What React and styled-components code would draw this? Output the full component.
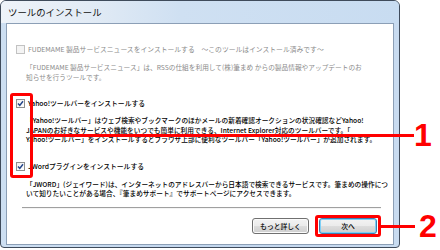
import React from "react";
import styled, { createGlobalStyle } from "styled-components";

const GlobalStyle = createGlobalStyle`
  html, body { margin: 0; padding: 0; background: #ffffff; }
  body { font-family: "Noto Sans CJK JP", "Noto Sans", sans-serif; }
`;

const Stage = styled.div`
  position: relative;
  width: 440px;
  height: 250px;
  overflow: hidden;
`;

const Window = styled.div`
  width: 400px;
  height: 248px;
  box-sizing: border-box;
  border: 1px solid #3f4b5b;
  border-radius: 6px 6px 4px 4px;
  background: linear-gradient(to right, #cddff2 0%, #c3d7ee 50%, #c8dbf0 100%);
  display: flex;
  flex-direction: column;
  overflow: hidden;
`;

const TitleBar = styled.div`
  height: 22px;
  flex: none;
  display: flex;
  align-items: center;
  padding-left: 7px;
  background: linear-gradient(to right, #eef3f9 0%, #e2ebf5 22%, #cfe0f2 45%, #c8dcf1 100%);
  font-size: 9.4px;
  color: #101010;
`;

const Panel = styled.div`
  flex: 1;
  margin: 0 5px 2px 5px;
  border: 1px solid #8c9fb6;
  background: #ffffff;
  display: flex;
  flex-direction: column;
  padding: 21px 0 0 9px;
`;

const CheckRow = styled.div`
  display: flex;
  align-items: center;
  gap: 3px;
  height: 9px;
  margin-top: ${(p) => p.$top}px;
  font-size: 6.8px;
  line-height: 9px;
  white-space: nowrap;
  font-weight: ${(p) => (p.$disabled ? 400 : 500)};
  color: ${(p) => (p.$disabled ? "#8a8a8a" : "#000000")};
`;

const Box = styled.span`
  width: 9px;
  height: 9px;
  box-sizing: border-box;
  flex: none;
  border: 1px solid ${(p) => (p.$disabled ? "#c2c2c2" : "#8e8f8f")};
  background: ${(p) =>
    p.$disabled
      ? "#f4f4f4"
      : "linear-gradient(135deg, #f0f0f0 0%, #ffffff 100%)"};
  display: flex;
  align-items: center;
  justify-content: center;
`;

const Desc = styled.div`
  margin: ${(p) => p.$top}px 0 0 10px;
  font-size: 6.7px;
  line-height: 9.5px;
  white-space: nowrap;
  font-weight: ${(p) => (p.$disabled ? 400 : 500)};
  color: ${(p) => (p.$disabled ? "#8a8a8a" : "#000000")};
`;

const Separator = styled.div`
  height: 1px;
  margin: 8px 12px 0 6px;
  background: #a0a0a0;
  border-bottom: 1px solid #f4f4f4;
`;

const ButtonRow = styled.div`
  display: flex;
  justify-content: flex-end;
  gap: 10px;
  margin-top: 9px;
  padding-right: 16px;
`;

const Button = styled.button`
  width: ${(p) => p.$w}px;
  height: 16px;
  padding: 0;
  box-sizing: border-box;
  border: 1px solid ${(p) => (p.$default ? "#3c7fb1" : "#707070")};
  border-radius: 3px;
  background: linear-gradient(to bottom, #f3f3f3 0%, #ebebeb 50%, #dddddd 51%, #cfcfcf 100%);
  box-shadow: inset 0 0 0 1px ${(p) => (p.$default ? "#7ed0f6" : "#fbfbfb")};
  font-family: "Noto Sans CJK JP", sans-serif;
  font-size: 6.8px;
  font-weight: 500;
  line-height: 14px;
  color: #000;
`;

const RedRect = styled.div`
  position: absolute;
  left: ${(p) => p.$x}px;
  top: ${(p) => p.$y}px;
  width: ${(p) => p.$w}px;
  height: ${(p) => p.$h}px;
  box-sizing: border-box;
  border: 3px solid #ff0000;
  border-radius: 3px;
`;

const RedLine = styled.div`
  position: absolute;
  left: ${(p) => p.$x}px;
  top: ${(p) => p.$y}px;
  width: ${(p) => p.$w}px;
  height: 3px;
  background: #ff0000;
`;

const Num = styled.div`
  position: absolute;
  left: ${(p) => p.$x}px;
  top: ${(p) => p.$y}px;
  font-family: "Liberation Sans", Arial, sans-serif;
  font-weight: bold;
  font-size: 32px;
  line-height: 32px;
  color: #ff0000;
`;

const Check = () => (
  <svg width="7" height="7" viewBox="0 0 7 7">
    <path d="M1 3.4 L2.8 5.4 L6 1.2" fill="none" stroke="#24468a" strokeWidth="1.5" />
  </svg>
);

export default function App() {
  return (
    <>
      <GlobalStyle />
      <Stage>
        <Window>
          <TitleBar>ツールのインストール</TitleBar>
          <Panel>
            <CheckRow $top={0} $disabled>
              <Box $disabled />
              FUDEMAME 製品サービスニュースをインストールする　～このツールはインストール済みです～
            </CheckRow>
            <Desc $top={9} $disabled>
              「FUDEMAME 製品サービスニュース」は、RSSの仕組を利用して(株)筆まめ からの製品情報やアップデートのお
              <br />
              知らせを行うツールです。
            </Desc>
            <CheckRow $top={17}>
              <Box>
                <Check />
              </Box>
              Yahoo!ツールバーをインストールする
            </CheckRow>
            <Desc $top={8}>
              「Yahoo!ツールバー」はウェブ検索やブックマークのほかメールの新着確認オークションの状況確認などYahoo!
              <br />
              JAPANのお好きなサービスや機能をいつでも簡単に利用できる、Internet Explorer対応のツールバーです。「
              <br />
              Yahoo!ツールバー」をインストールするとブラウザ上部に便利なツールバー「Yahoo!ツールバー」が追加されます。
            </Desc>
            <CheckRow $top={17}>
              <Box>
                <Check />
              </Box>
              JWordプラグインをインストールする
            </CheckRow>
            <Desc $top={9}>
              「JWORD」(ジェイワード)は、インターネットのアドレスバーから日本語で検索できるサービスです。筆まめの操作につ
              <br />
              いて知りたいことがある場合、『筆まめサポート』でサポートページにアクセスできます。
            </Desc>
            <Separator />
            <ButtonRow>
              <Button $w={57}>もっと詳しく</Button>
              <Button $w={58} $default>次へ</Button>
            </ButtonRow>
          </Panel>
        </Window>
        <RedRect $x={10} $y={93} $w={23} $h={85} />
        <RedLine $x={32} $y={134} $w={382} />
        <Num $x={414} $y={119}>1</Num>
        <RedRect $x={315} $y={215} $w={66} $h={22} />
        <RedLine $x={380} $y={225} $w={35} />
        <Num $x={419} $y={210}>2</Num>
      </Stage>
    </>
  );
}
